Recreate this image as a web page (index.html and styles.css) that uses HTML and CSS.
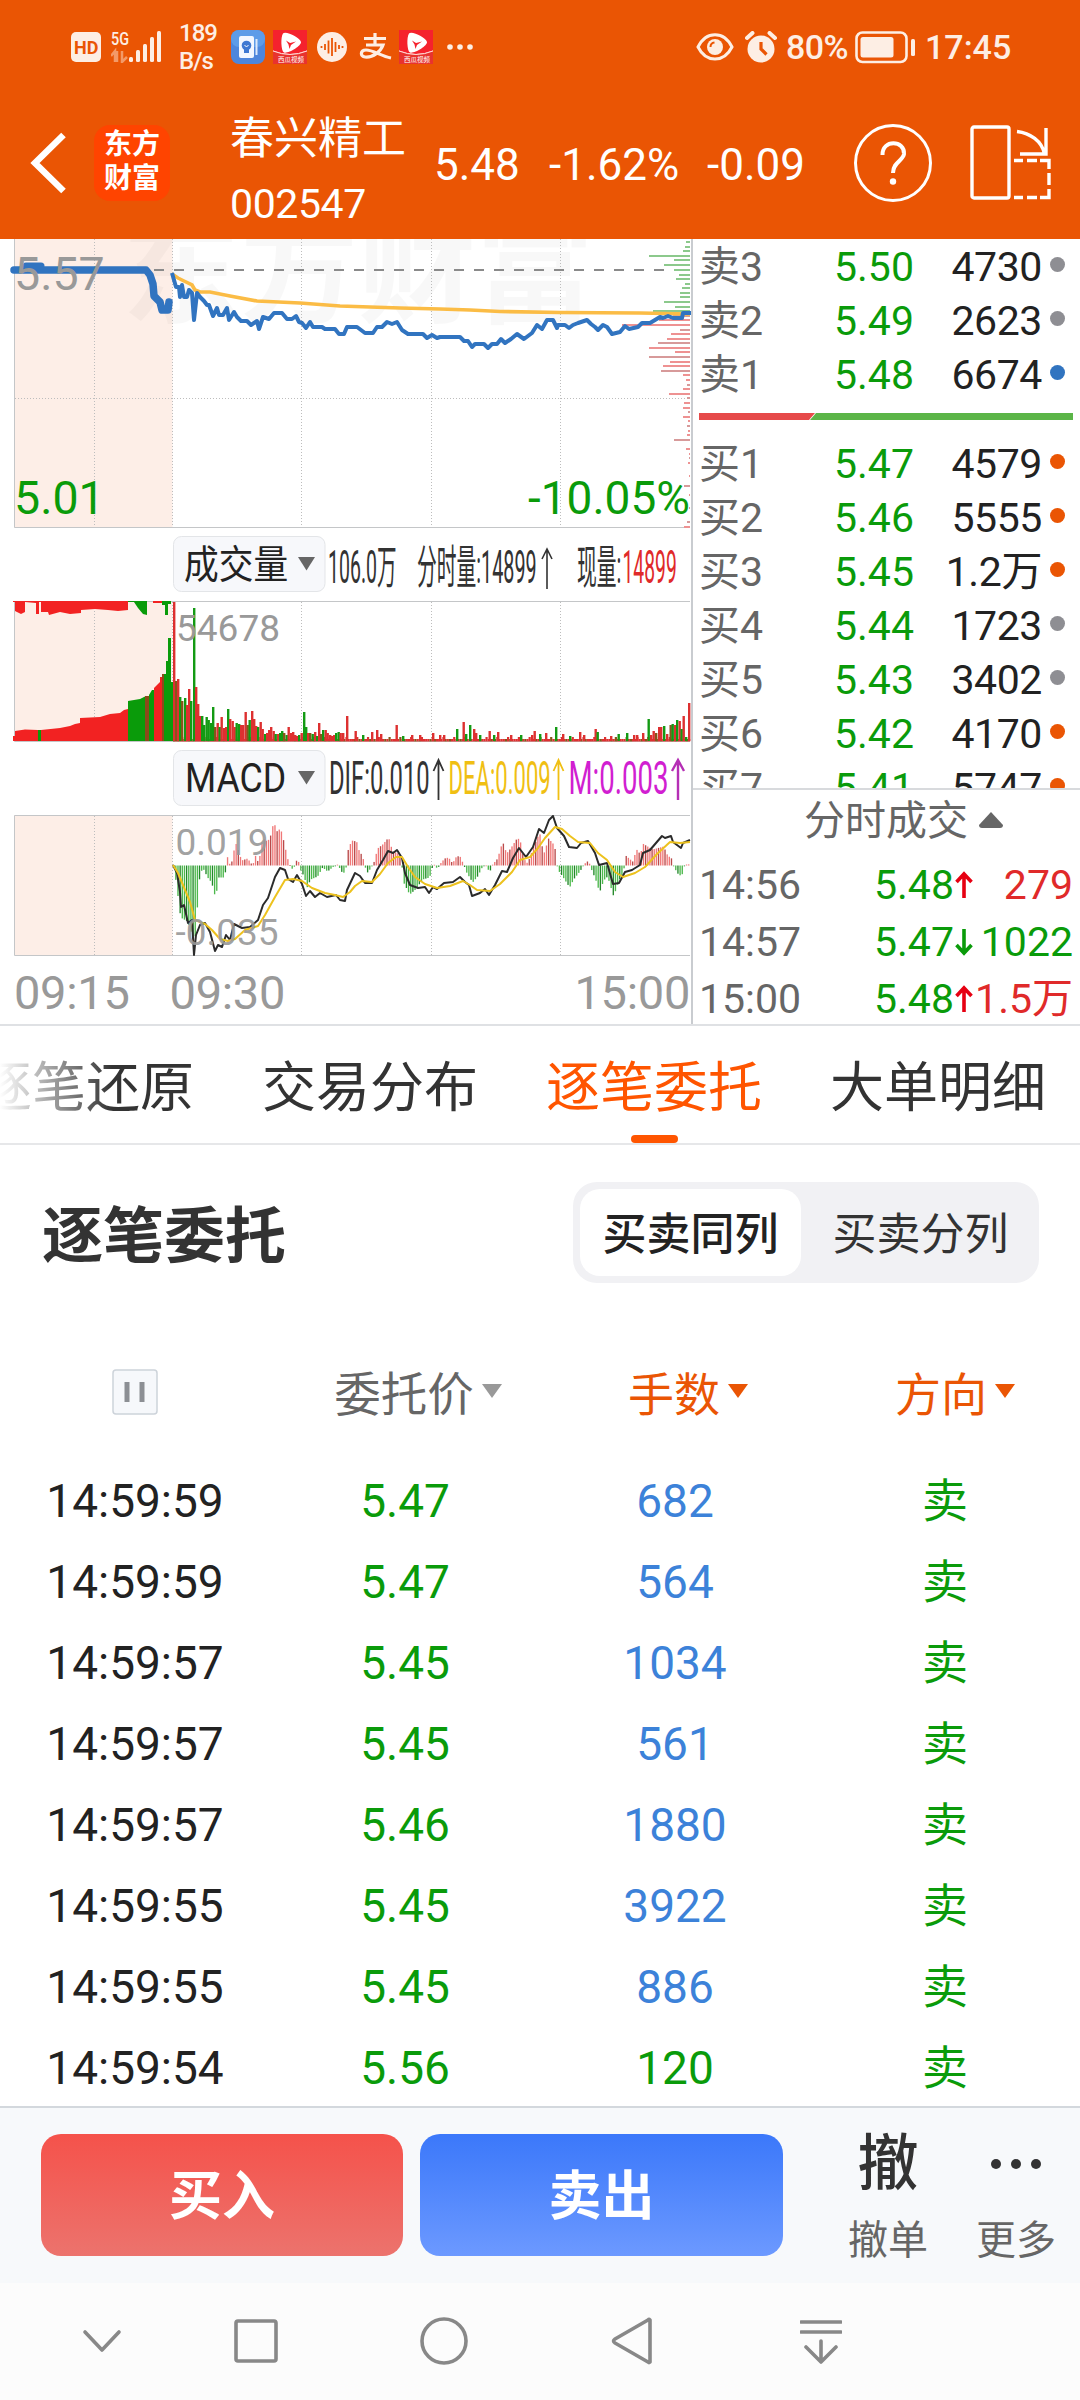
FILE: index.html
```html
<!DOCTYPE html>
<html lang="zh-CN">
<head>
<meta charset="utf-8">
<title>春兴精工 002547</title>
<link rel="stylesheet" href="styles.css">
</head>
<body>
<svg class="defs" width="0" height="0">
  <symbol id="video-app" viewBox="0 0 34 34">
    <rect width="34" height="34" fill="#f5222d"/>
    <path d="M0 21Q17 28 34 21" fill="none" stroke="#ffd9d4" stroke-width="1"/>
    <path fill-rule="evenodd" d="M10 3.500C13 .500 27 8 28 12C28.500 16 15 24 11 22.500C8 21 7.500 7 10 3.500ZM13 10.500L17 13L23 11.500L18 15L16.500 19L15.500 14.500Z" fill="#fff"/>
    <path d="M0 21Q17 28 34 21V34H0Z" fill="#e8332e"/>
    <path d="M0 21Q17 28 34 21" fill="none" stroke="#ffd9d4" stroke-width="1"/>
    <text x="5" y="31.500" font-size="6.500" fill="#fff">西瓜视频</text>
  </symbol>
  <symbol id="up" viewBox="0 0 18 28"><path d="M9 27V3M1.500 11L9 3L16.500 11" fill="none" stroke="#e60012" stroke-width="3.600"/></symbol>
  <symbol id="down" viewBox="0 0 18 28"><path d="M9 1V25M1.500 17L9 25L16.500 17" fill="none" stroke="#0a9b0a" stroke-width="3.600"/></symbol>
</svg>
<div class="screen">
  <div class="top">
    <div class="status">
      <svg class="s-hd" width="30" height="30" viewBox="0 0 30 30"><rect width="30" height="30" rx="5" fill="#fdeee4"/><text x="3" y="21.500" font-size="18" font-weight="700" fill="#ea5504">HD</text></svg>
      <svg class="s-signal" width="51" height="32" viewBox="0 0 51 32" fill="#fdeee4"><text transform="translate(0 14) scale(.8 1)" font-size="18" font-weight="500">5G</text><path d="M4 31V20L0 25M6 20V31M11 20V31L16 26" fill="none" stroke="#f39a68" stroke-width="2.500"/><rect x="18" y="26" width="4" height="5" rx="1.500"/><rect x="25" y="19" width="4" height="12" rx="1.500"/><rect x="32" y="13" width="4" height="18" rx="1.500"/><rect x="39" y="6" width="4" height="25" rx="1.500"/><rect x="46" y="0" width="4" height="31" rx="1.500"/></svg>
      <div class="s-speed"><span>189</span><span>B/s</span></div>
      <svg class="s-tips" width="34" height="34" viewBox="0 0 34 34"><rect width="34" height="34" rx="8" fill="#4d86dc"/><rect width="34" height="17" rx="8" fill="#5d9ce8"/><rect x="8" y="6" width="15" height="22" rx="2" fill="#f2f7ff"/><path d="M25.500 9V25" stroke="#dce9fb" stroke-width="2"/><circle cx="15.500" cy="15.500" r="4.800" fill="#3d78d2"/><path d="M13 19h5v4h-5z" fill="#3d78d2"/><path d="M13.500 15l2 2 2-2" fill="none" stroke="#fff"/></svg>
      <svg class="s-video" width="34" height="34"><use href="#video-app"/></svg>
      <svg class="s-wave" width="30" height="30" viewBox="0 0 30 30"><circle cx="15" cy="15" r="15" fill="#fdeee4"/><path d="M4.500 14v2M8 12v6M11.500 8.500v13M15 6v18M18.500 10v10M22 13v4M25.500 14v2" stroke="#ea5504" stroke-width="1.800"/></svg>
      <svg class="s-pay" width="34" height="28" viewBox="0 0 34 28" fill="none" stroke="#fdeee4" stroke-width="3.200"><path d="M5 5.500H27M16 0V11M7 12H24C22 18 14 25 6 24C1 23.500 1 17 7 17C14 17 22 23 32 25"/></svg>
      <svg class="s-video2" width="34" height="34"><use href="#video-app"/></svg>
      <svg class="s-more" width="26" height="6" viewBox="0 0 26 6" fill="#fdeee4"><circle cx="3" cy="3" r="2.800"/><circle cx="13" cy="3" r="2.800"/><circle cx="23" cy="3" r="2.800"/></svg>
      <span class="grow"></span>
      <svg class="s-eye" width="38" height="30" viewBox="0 0 38 30"><path d="M2 15C10 -1.500 28 -1.500 36 15C28 31 10 31 2 15Z" fill="none" stroke="#fdeee4" stroke-width="3"/><circle cx="19" cy="15" r="8" fill="#fdeee4"/><path d="M14.500 15Q14.500 11 18.500 10.500" fill="none" stroke="#ea5504" stroke-width="2"/></svg>
      <svg class="s-alarm" width="32" height="32" viewBox="0 0 32 32"><circle cx="16" cy="18" r="13.500" fill="#fdeee4"/><path d="M2 7L7.500 2M30 7L24.500 2" stroke="#fdeee4" stroke-width="4" stroke-linecap="round"/><path d="M16 11V18L21.500 23.500" fill="none" stroke="#ea5504" stroke-width="3.200"/></svg>
      <span class="s-pct">80%</span>
      <svg class="s-batt" width="61" height="33" viewBox="0 0 61 33"><rect x="1.500" y="1.500" width="50" height="29.500" rx="6" fill="none" stroke="#fdeee4" stroke-width="2.600"/><rect x="5.500" y="6" width="33" height="20.500" rx="2.500" fill="#fdeee4"/><rect x="56" y="8" width="4" height="17" rx="1.500" fill="#fdeee4"/></svg>
      <span class="s-time">17:45</span>
    </div>
    <div class="titlebar">
      <svg class="back" width="38" height="64" viewBox="0 0 38 64"><path d="M34.500 4L6 32L34.500 60" fill="none" stroke="#fff" stroke-width="6.500"/></svg>
      <div class="logo"><span>东方</span><span>财富</span></div>
      <div class="stock"><span class="stock-name">春兴精工</span><span class="stock-code">002547</span></div>
      <span class="q-price">5.48</span>
      <span class="q-pct">-1.62%</span>
      <span class="q-diff">-0.09</span>
      <svg class="help" width="80" height="80" viewBox="0 0 80 80"><circle cx="40" cy="40" r="37.500" fill="none" stroke="#fff" stroke-width="3"/><path d="M29.500 32C29 16 52 17 51 31C50 38 40 39 40 50" fill="none" stroke="#fff" stroke-width="4"/><circle cx="40" cy="58.500" r="3.200" fill="#fff"/></svg>
      <svg class="rotate" width="82" height="76" viewBox="0 0 82 76" fill="none" stroke="#fff" stroke-width="3.400"><rect x="2" y="2" width="37" height="71" rx="2"/><path d="M47 6.500C60 8 72 16 74.500 29M76 3V29H50M44 35.500H53M57 35.500H67M70 35.500H79V44M79 48V60M79 64V72.500H70M67 72.500H57M53 72.500H44"/></svg>
    </div>
  </div>

  <div class="market">
    <div class="charts">
      <svg class="price" width="691" height="290" viewBox="0 239 691 290">
        <rect x="14" y="239" width="158.500" height="289" fill="#fdeee7"/>
        <text x="122" y="314" font-size="118" font-weight="700" fill="#000" fill-opacity=".028">东方财富</text>
        <path d="M94.500 239V527M172.500 239V527M301.500 239V527M431.500 239V527M560.500 239V527M15 398.500H690" stroke="#bdbdbd" stroke-dasharray="1 2"/>
        <path d="M14.500 239V527.500H690" fill="none" stroke="#c4c6c8"/>
        <path d="M14 270H690" stroke="#8a8a8a" stroke-width="2" stroke-dasharray="10 10"/>
        <g id="ladder"></g>
        <path d="M172 274L178 278L184 281L192 285L195 290L200 292L210 292L230 296L257 301L300 303L340 306L400 308L440 309L470 310L500 311.500L560 312.500L640 313L690 314" fill="none" stroke="#fbbc45" stroke-width="3.600"/>
        <path d="M14 270H146L150 275L153 284L154 296L160 302L162 310H168L169 302" fill="none" stroke="#3174c0" stroke-width="7.500" stroke-linecap="round" stroke-linejoin="round"/>
        <path d="M26 266H41" stroke="#3174c0" stroke-width="7" stroke-linecap="round"/>
        <path d="M172 273L176 287L179 287L180 297L182 285L184 297L187 297L189 290L192 293L194 320L197 293L200 297L204 301L207 305L209 305L213 316L217 308L219 315L223 315L227 308L229 320L234 312L237 317L241 321L247 321L251 325L257 321L259 329L263 317L269 319L274 313L282 313L287 319L292 319L296 316L299 322L302 323L306 328L310 322L313 327L318 327L322 327L325 329L335 329L339 334L344 334L347 327L357 327L365 333L373 333L377 327L382 327L387 322L392 324L397 322L402 330L408 334L423 334L427 338L432 335L437 338L440 337L460 337L464 341L468 341L472 347L475 344L484 344L488 348L492 344L497 344L501 339L505 343L511 339L517 334L524 339L532 333L537 325L542 329L547 320L553 320L557 328L558 325L565 325L569 328L573 325L578 323L587 320L591 324L595 327L598 330L603 325L607 327L612 334L620 332L625 326L629 329L638 327L642 323L650 323L655 320L660 317L663 318L668 316L673 318L682 318L683 313L691 313" fill="none" stroke="#3174c0" stroke-width="4" stroke-linejoin="round"/>
        <text x="14" y="289.500" font-size="46.500" fill="#999">5.57</text>
        <text x="14" y="514" font-size="46.500" fill="#0a9b0a">5.01</text>
        <text x="690" y="514" font-size="46" fill="#0a9b0a" text-anchor="end">-10.05%</text>
      </svg>

      <svg class="legend" width="691" height="71" viewBox="0 530 691 71">
        <rect x="173.500" y="536.500" width="151.500" height="55" rx="8" fill="#f7f8fb" stroke="#e3e5e8"/>
        <text transform="translate(184 578) scale(.89 1)" font-size="39" fill="#222">成交量</text>
        <path d="M298 557H315L306.500 570.500Z" fill="#666"/>
        <g font-size="46" fill="#333">
          <text transform="translate(328 583) scale(.425 1)">106.0万</text>
          <text transform="translate(417 583) scale(.43 1)">分时量:14899</text>
          <path d="M547 589V549M542 559L547 549L552 559" fill="none" stroke="#333" stroke-width="1.600"/>
          <text transform="translate(577 583) scale(.43 1)">现量:</text>
          <text transform="translate(622.500 583) scale(.42 1)" fill="#e02a2a">14899</text>
        </g>
      </svg>

      <svg class="volume" width="691" height="142" viewBox="0 601 691 142">
        <rect x="14" y="601" width="158.500" height="140" fill="#fdeee7"/>
        <path d="M94.500 602V741M172.500 602V741M301.500 602V741M431.500 602V741M560.500 602V741" stroke="#bdbdbd" stroke-dasharray="1 2"/>
        <path d="M690 601.500H14.500V741.500H690" fill="none" stroke="#c4c6c8"/>
        <path d="M13 601H128V610L118 611L108 610L95 609L81 610V613L70 614L60 612L49 615L48 612H41V602H39V614H36V603L25 602V612L21 614L15 611V602H13Z" fill="#f22222"/>
        <path d="M128 601H147V615L143 614L138 608L134 602H128ZM162 601H171V604H168V615H165V605H162Z" fill="#0a9b0a"/>
        <path d="M153 601H162V603H153Z" fill="#f22222"/>
        <path d="M13 741V736H15V731L25 729.500L38 730H41L60 728L70 726L75 724L80 723V718L100 717L110 714L120 713L124 710L128 709V741Z" fill="#f22222"/>
        <path d="M38 741V730H41V741ZM128 741V701L140 699L146 696H149V741Z" fill="#0a9b0a"/>
        <path d="M145 741V696H149V741ZM162 741V674H165V741Z" fill="#8b4a1a"/>
        <path d="M149 741V695L152 690H154V741ZM164 741V674H166V661H168V638H171V741ZM171 741V682H173V741Z" fill="#0a9b0a"/>
        <path d="M154 741V688L158 684L160 682V677H162V741Z" fill="#f22222"/>
        <g id="volume-bars"></g>
        <text x="176" y="641" font-size="37" fill="#999">54678</text>
      </svg>

      <svg class="legend" width="691" height="72" viewBox="0 743 691 72">
        <rect x="173.500" y="750.500" width="151.500" height="55" rx="8" fill="#f7f8fb" stroke="#e3e5e8"/>
        <text transform="translate(185 792) scale(.87 1)" font-size="41" fill="#222">MACD</text>
        <path d="M298 771H315L306.500 784.500Z" fill="#666"/>
        <g font-size="46">
          <text transform="translate(329 794) scale(.517 1)" fill="#333">DIF:0.010</text>
          <text transform="translate(448.500 794) scale(.48 1)" fill="#f0bf13">DEA:0.009</text>
          <text transform="translate(568.500 794) scale(.6 1)" fill="#d11fd1">M:0.003</text>
        </g>
        <g fill="none" stroke-width="1.800">
          <path d="M438.500 800V760M433.500 771L438.500 760L443.500 771" stroke="#333"/>
          <path d="M558.500 800V760M553.500 771L558.500 760L563.500 771" stroke="#f0bf13"/>
          <path d="M678 800V760M672 771L678 760L684 771" stroke="#b52fb5" stroke-width="2.400"/>
        </g>
      </svg>

      <svg class="macd" width="691" height="142" viewBox="0 815 691 142">
        <rect x="14" y="815" width="158.500" height="140" fill="#fdeee7"/>
        <path d="M94.500 816V955M172.500 816V955M301.500 816V955M431.500 816V955M560.500 816V955" stroke="#bdbdbd" stroke-dasharray="1 2"/>
        <path d="M690 815.500H14.500V955.500H690" fill="none" stroke="#c4c6c8"/>
        <g id="macd-bars"></g>
        <path d="M173 865L177 873L180 892L181 907L184 905L188 923L192 920L194 955L196 935L200 925L205 923L210 932L215 951L218 945L222 947L226 935L230 940L234 924L242 928L250 927L258 920L263 905L268 898L275 877L280 868L285 870L288 879L293 882L297 875L302 884L306 896L310 891L315 897L320 893L327 897L336 895L340 900L345 901L347 890L355 873L360 876L365 883L372 883L377 870L383 860L388 851L393 853L397 850L402 858L405 873L410 885L418 888L425 887L429 893L433 887L437 889L444 883L453 882L460 877L465 882L469 885L472 896L480 893L485 889L489 895L495 885L502 871L507 872L513 858L519 848L526 857L533 847L539 829L544 833L549 820L553 816L557 828L564 836L569 847L577 848L581 843L588 841L595 853L599 865L607 863L613 884L619 883L625 872L632 870L640 865L643 853L650 850L662 836L665 838L671 836L673 842L681 848L683 843L690 840" fill="none" stroke="#2b2b2b" stroke-width="2" stroke-linejoin="round"/>
        <path d="M173 865L178 873L183 885L190 902L195 920L205 924L212 930L220 939L228 941L235 939L245 930L258 926L265 915L275 897L285 880L293 879L302 881L312 888L325 893L335 895L343 897L350 892L355 886L362 881L372 882L380 874L388 863L396 857L402 857L408 867L415 877L425 884L437 888L450 886L463 881L470 885L477 890L490 891L500 884L512 872L520 860L530 857L538 848L545 838L555 827L562 829L570 836L578 842L590 843L598 853L607 860L615 872L623 877L635 873L645 867L657 854L670 842L680 843L690 842" fill="none" stroke="#edc21e" stroke-width="2" stroke-linejoin="round"/>
        <g font-size="37" fill="#999" fill-opacity=".92">
          <text x="175.500" y="855">0.019</text>
          <text x="175.500" y="945">-0.035</text>
        </g>
      </svg>
      <div class="times"><span>09:15</span><span class="t-open">09:30</span><span class="t-close">15:00</span></div>
    </div>

    <div class="book">
      <div class="levels">
        <div class="level"><span>卖3</span><b>5.50</b><em>4730</em><i class="grey"></i></div>
        <div class="level"><span>卖2</span><b>5.49</b><em>2623</em><i class="grey"></i></div>
        <div class="level"><span>卖1</span><b>5.48</b><em>6674</em><i class="blue"></i></div>
        <svg class="ratio" width="374" height="7" viewBox="0 0 374 7"><path d="M0 0H116L110 7H0Z" fill="#e64a4a"/><path d="M117 0H374V7H111Z" fill="#5bb548"/></svg>
        <div class="level"><span>买1</span><b>5.47</b><em>4579</em><i></i></div>
        <div class="level"><span>买2</span><b>5.46</b><em>5555</em><i></i></div>
        <div class="level"><span>买3</span><b>5.45</b><em>1.2万</em><i></i></div>
        <div class="level"><span>买4</span><b>5.44</b><em>1723</em><i class="grey"></i></div>
        <div class="level"><span>买5</span><b>5.43</b><em>3402</em><i class="grey"></i></div>
        <div class="level"><span>买6</span><b>5.42</b><em>4170</em><i></i></div>
        <div class="level"><span>买7</span><b>5.41</b><em>5747</em><i></i></div>
      </div>
      <div class="ticks-head">分时成交<svg width="24" height="16" viewBox="0 0 24 16"><path d="M12 0L24 13Q24 16 21 16H3Q0 16 0 13Z" fill="#666"/></svg></div>
      <div class="tick"><span>14:56</span><b>5.48</b><svg width="18" height="28"><use href="#up"/></svg><em class="red">279</em></div>
      <div class="tick"><span>14:57</span><b>5.47</b><svg width="18" height="28"><use href="#down"/></svg><em class="green">1022</em></div>
      <div class="tick"><span>15:00</span><b>5.48</b><svg width="18" height="28"><use href="#up"/></svg><em class="red">1.5万</em></div>
    </div>
  </div>

  <div class="tabs">
    <span class="tab faded">逐笔还原</span><span class="tab">交易分布</span><span class="tab active">逐笔委托</span><span class="tab">大单明细</span>
  </div>

  <div class="section-head">
    <h2>逐笔委托</h2>
    <div class="segment"><span class="on">买卖同列</span><span>买卖分列</span></div>
  </div>

  <div class="orders">
    <div class="row head">
      <span><svg width="46" height="46" viewBox="0 0 46 46"><rect x="1" y="1" width="44" height="44" rx="3" fill="#f6f8fb" stroke="#cdd3da" stroke-width="1.500"/><path d="M15 13V33M30 13V33" stroke="#8c8f94" stroke-width="5"/></svg></span>
      <span class="sort">委托价<svg width="20" height="14"><path d="M0 0H20L10 14Z" fill="#999"/></svg></span>
      <span class="sort hot">手数<svg width="20" height="14"><path d="M0 0H20L10 14Z" fill="#ea5504"/></svg></span>
      <span class="sort hot">方向<svg width="20" height="14"><path d="M0 0H20L10 14Z" fill="#ea5504"/></svg></span>
    </div>
    <div class="row"><span>14:59:59</span><span class="green">5.47</span><span class="lots">682</span><span class="green">卖</span></div>
    <div class="row"><span>14:59:59</span><span class="green">5.47</span><span class="lots">564</span><span class="green">卖</span></div>
    <div class="row"><span>14:59:57</span><span class="green">5.45</span><span class="lots">1034</span><span class="green">卖</span></div>
    <div class="row"><span>14:59:57</span><span class="green">5.45</span><span class="lots">561</span><span class="green">卖</span></div>
    <div class="row"><span>14:59:57</span><span class="green">5.46</span><span class="lots">1880</span><span class="green">卖</span></div>
    <div class="row"><span>14:59:55</span><span class="green">5.45</span><span class="lots">3922</span><span class="green">卖</span></div>
    <div class="row"><span>14:59:55</span><span class="green">5.45</span><span class="lots">886</span><span class="green">卖</span></div>
    <div class="row"><span>14:59:54</span><span class="green">5.56</span><span class="green">120</span><span class="green">卖</span></div>
  </div>

  <div class="actions">
    <div class="btn buy">买入</div>
    <div class="btn sell">卖出</div>
    <div class="act cancel"><span class="act-icon">撤</span><span class="act-label">撤单</span></div>
    <div class="act more"><span class="act-icon"><svg width="50" height="10" viewBox="0 0 50 10" fill="#333"><circle cx="5" cy="5" r="5"/><circle cx="25" cy="5" r="5"/><circle cx="45" cy="5" r="5"/></svg></span><span class="act-label">更多</span></div>
  </div>

  <div class="nav">
    <svg class="n1" width="40" height="48" viewBox="0 0 40 48"><path d="M3 15L20 33L37 15"/></svg>
    <svg class="n2" width="44" height="48" viewBox="0 0 44 48"><rect x="2" y="4" width="40" height="40" rx="2"/></svg>
    <svg class="n3" width="50" height="48" viewBox="0 0 50 48"><circle cx="25" cy="24" r="22"/></svg>
    <svg class="n4" width="42" height="48" viewBox="0 0 42 48"><path d="M39 3V45Q38 46 37 45L4 26Q1 24 4 22L37 3Q38 2 39 3Z"/></svg>
    <svg class="n5" width="42" height="48" viewBox="0 0 42 48"><path d="M1 5H41M1 15H41M21 24V45M6 30L21 45L36 30"/></svg>
  </div>
</div>
<script src="charts.js"></script>
</body>
</html>
```

FILE: styles.css
```css
* { box-sizing: border-box; }
body { margin: 0; background: #fff; font-family: Roboto, "Noto Sans CJK SC", sans-serif; color: #222; }
svg { display: block; flex: none; }
svg text { font-family: Roboto, "Noto Sans CJK SC", sans-serif; }
b, em, i { font-weight: 400; font-style: normal; }
.defs { display: none; }
.screen { width: 1080px; height: 2400px; display: flex; flex-direction: column; overflow: hidden; }
.green { color: #0a9b0a; }
.red { color: #e02a2a; }
.grow { flex: 1; }

.top { height: 239px; flex: none; background: #ea5504; color: #fff; }
.status { height: 94px; padding: 0 72px 0 71px; display: flex; align-items: center; color: #fdeee4; }
.s-signal { margin-left: 10px; }
.s-speed { margin-left: 17px; width: 40px; flex: none; font-size: 24px; line-height: 28px; font-weight: 500; display: flex; flex-direction: column; letter-spacing: -1px; }
.s-tips { margin-left: 12px; }
.s-video { margin-left: 8px; }
.s-wave { margin-left: 10px; }
.s-pay { margin-left: 12px; }
.s-video2 { margin-left: 6px; }
.s-more { margin-left: 14px; }
.s-alarm { margin-left: 11px; }
.s-pct { margin-left: 9px; width: 69px; font-size: 34px; font-weight: 500; letter-spacing: -.6px; }
.s-time { width: 83px; margin-left: 9px; font-size: 34px; font-weight: 500; }

.titlebar { height: 145px; display: flex; align-items: center; padding-bottom: 7px; }
.back { margin-left: 29px; }
.logo { margin-left: 27px; width: 76px; height: 76px; border-radius: 16px; background: #ff4400; display: flex; flex-direction: column; align-items: center; padding-top: 3px; font-size: 28px; line-height: 34px; font-weight: 700; }
.stock { margin-left: 60px; width: 203px; display: flex; flex-direction: column; font-size: 44px; line-height: 65px; padding-top: 16px; }
.stock-code { font-size: 41px; line-height: 64px; letter-spacing: -.4px; }
.q-price, .q-pct, .q-diff { font-size: 44px; white-space: nowrap; padding-top: 3px; }
.q-price { margin-left: 1px; width: 115px; }
.q-pct { width: 158px; }
.q-diff { width: 145px; }
.help { margin-left: 1px; }
.rotate { margin-left: 37px; }

.market { height: 787px; flex: none; display: flex; border-bottom: 2px solid #dfe1e4; }
.charts { width: 691px; display: flex; flex-direction: column; }
.legend:nth-of-type(2) { margin-top: 1px; }
.times { height: 67px; display: flex; font-size: 47px; line-height: 72px; color: #999; padding-left: 14px; letter-spacing: -.3px; }
.t-open { margin-left: 40px; }
.t-close { margin-left: auto; margin-right: 1px; }
.book { width: 389px; border-left: 2px solid #c9ccd0; font-size: 41px; color: #666; }
.levels { height: 551px; overflow: hidden; border-bottom: 2px solid #d8dadd; }
.level { height: 54px; display: grid; grid-template-columns: 135px 90px 118px 1fr; align-items: center; padding-left: 6px; line-height: 56px; }
.level b, .tick b { color: #0a9b0a; }
.level em { color: #222; text-align: right; letter-spacing: -.4px; }
.level i { width: 15px; height: 15px; border-radius: 50%; background: #ea5504; margin: -5px 0 0 8px; }
.level i.grey { background: #8e8e93; }
.level i.blue { background: #3174c0; }
.ratio { margin: 12px 0 16px 6px; }
.ticks-head { height: 66px; display: flex; align-items: center; justify-content: center; gap: 11px; font-size: 41px; line-height: 62px; padding: 0 0 4px 34px; }
.ticks-head svg { margin-top: -2px; }
.tick { height: 57px; display: grid; grid-template-columns: 175px 81px 18px 1fr; align-items: center; padding: 0 7px 0 6px; line-height: 58px; }
.tick em { text-align: right; white-space: nowrap; margin-left: -12px; }

.tabs { height: 119px; flex: none; border-bottom: 2px solid #e6e7e9; display: flex; gap: 68px; margin-left: -22px; font-size: 54px; line-height: 125px; color: #333; white-space: nowrap; }
.tab { position: relative; width: 216px; flex: none; height: 117px; }
.tab.faded { background: linear-gradient(90deg, #fff 10%, #333 62%); -webkit-background-clip: text; background-clip: text; color: transparent; }
.tab.active { color: #ff5500; }
.tab.active::after { content: ""; position: absolute; left: 85px; bottom: 0; width: 47px; height: 8px; border-radius: 4px; background: #ff5500; }

.section-head { height: 175px; flex: none; display: flex; align-items: center; justify-content: space-between; padding: 0 41px 0 42px; }
h2 { margin: 9px 0 0; font-size: 61px; font-weight: 700; line-height: 90px; color: #333; }
.segment { width: 466px; height: 101px; border-radius: 24px; background: #f1f1f4; padding: 7px; display: flex; margin-bottom: 1px; color: #333; }
.segment span { flex: 1; text-align: center; font-size: 44px; line-height: 92px; padding-left: 8px; }
.segment .on { flex: 0 0 221px; height: 87px; padding: 0; border-radius: 20px; background: #fff; font-weight: 500; color: #222; }

.orders { height: 786px; flex: none; padding-top: 31px; display: flex; flex-direction: column; }
.row { height: 81px; flex: none; display: grid; grid-template-columns: repeat(4, 270px); justify-items: center; align-items: center; font-size: 46px; line-height: 83px; white-space: nowrap; }
.row.head { height: 109px; align-items: start; line-height: 88px; color: #666; }
.head > span:first-child { padding-top: 18px; }
.sort { display: flex; align-items: center; gap: 8px; padding-left: 26px; }
.sort:nth-child(2) { font-size: 46.500px; }
.sort:nth-child(4) { padding-left: 20px; }
.sort svg { margin-top: -8px; }
.hot { color: #ea5504; }
.lots { color: #3c82d9; }

.actions { height: 177px; flex: none; background: #f7f9fb; border-top: 2px solid #d3d8dd; display: flex; padding: 26px 0 0 41px; }
.btn { width: 362px; height: 122px; border-radius: 20px; color: #fff; font-size: 53px; line-height: 127px; font-weight: 700; text-align: center; }
.buy { background: linear-gradient(#f5524b, #ec736d); }
.sell { margin-left: 17px; width: 363px; background: linear-gradient(#3b78fa, #6c99ff); }
.act { display: flex; flex-direction: column; align-items: center; width: 128px; }
.cancel { margin-left: 41px; }
.act-icon { height: 60px; display: flex; align-items: center; font-size: 61px; line-height: 60px; font-weight: 500; color: #333; }
.act-label { margin-top: 20px; font-size: 40px; line-height: 54px; color: #666; }

.nav { flex: 1; background: #fcfcfc; display: flex; padding-top: 34px; }
.nav svg { fill: none; stroke: #888; stroke-width: 3.6; stroke-linecap: round; stroke-linejoin: round; }
.n1 { margin-left: 82px; }
.n2 { margin-left: 112px; }
.n3 { margin-left: 141px; }
.n4 { margin-left: 142px; }
.n5 { margin-left: 147px; }
```

FILE: charts.js
```js
const NS = "http://www.w3.org/2000/svg";
const RED = "#dd3030", GREEN = "#139a13", MIXED = "#86561a";

function bar(group, x, y, w, h, fill) {
  const r = document.createElementNS(NS, "rect");
  r.setAttribute("x", x.toFixed(2));
  r.setAttribute("y", y.toFixed(2));
  r.setAttribute("width", w.toFixed(2));
  r.setAttribute("height", h.toFixed(2));
  r.setAttribute("fill", fill);
  group.appendChild(r);
}

// Volume traded at each price: [y, length], growing leftwards from the right edge.
const sells = [[242,4],[247,5],[251,7],[256,41],[260,16],[265,26],[270,16],[275,11],[279,14],[284,5],[288,8],[293,10],[297,10],[302,26],[307,15],[311,37]];
const buys = [[316,17],[320,31],[325,68],[330,10],[334,19],[339,23],[343,32],[348,41],[352,15],[357,41],[362,20],[366,27],[371,29],[375,7],[380,4],[385,3],[389,7],[394,21],[398,3],[403,6],[408,7],[412,2],[417,7],[421,2],[426,3],[431,2],[435,3],[440,16],[449,4],[454,1],[458,1],[463,2],[476,1],[486,6],[495,1],[508,1],[522,3],[527,6]];
const ladder = document.getElementById("ladder");
sells.forEach(([y, l]) => bar(ladder, 690 - l, y - 1, l, 2, "#8cc98c"));
buys.forEach(([y, l], i) => bar(ladder, 690 - l, y - 1, l, 2, i % 3 ? "#ee9292" : "#d79a9a"));

// One-minute volume: [x, height, colour].
const R = RED, G = GREEN, M = MIXED;
const vol = [[174,139,R],[176,60,M],[178,62,R],[180,44,G],[182,40,M],[185,43,G],[187,36,R],[189,52,R],[191,40,G],[194,133,G],[196,54,R],[198,37,R],[200,25,R],[202,25,G],[204,16,G],[206.500,24,G],[208.500,21,G],[211,18,G],[213,34,G],[215,14,M],[217.500,18,R],[219.500,14,G],[221.500,24,R],[224,13,R],[226,14,R],[228,32,G],[230,22,R],[232.500,20,R],[234.500,14,R],[236.500,18,G],[239,17,G],[241,16,R],[243,16,R],[245.500,29,R],[247.500,16,M],[249.500,21,G],[252,30,R],[254,22,R],[256,15,R],[258,14,G],[260.500,19,R],[262.500,12,R],[265,7,G],[267,8,R],[269,11,R],[271,14,R],[273.500,10,R],[275.500,7,G],[278,7,R],[280,8,G],[282,10,G],[284,8,M],[286.500,6,G],[288.500,14,R],[291,8,R],[293,9,R],[295,6,R],[297,5,R],[299,6,G],[301.500,8,R],[304,29,G],[306,14,G],[308,8,R],[310,8,M],[312.500,7,G],[315,9,R],[317,5,G],[319,18,R],[321,7,M],[323,11,G],[325.500,11,R],[327.500,8,R],[330,6,R],[332,5,R],[334,6,R],[336,8,G],[338.500,9,G],[340.500,8,R],[343,8,R],[347,25,R],[355.500,10,R],[363,6,G],[372,9,R],[377,11,R],[381,7,R],[396.500,16,R],[403,5,G],[412,6,R],[420,6,R],[433,8,R],[440,6,R],[444,6,R],[457,12,G],[463.500,19,R],[466,7,G],[470,16,G],[474,12,R],[476,8,R],[480,6,G],[489.500,10,R],[494,6,G],[498,9,R],[511,6,R],[521,6,G],[532,6,R],[534.500,10,R],[540,7,G],[546,8,R],[556,14,G],[563,7,R],[570,5,G],[580,9,R],[584,6,R],[595.500,12,R],[597.500,9,G],[611,5,R],[618.500,7,G],[627,8,G],[634,6,R],[637,6,R],[643,8,R],[648.500,22,G],[651,6,R],[653.500,10,R],[656,8,M],[659,14,R],[661,14,R],[664,15,G],[667,7,R],[670.500,16,M],[672.500,17,G],[675,16,R],[677,21,G],[679.500,20,R],[681.500,12,G],[683.500,25,R],[686,4,G],[689,38,R]];
const vb = document.getElementById("volume-bars");
for (let i = 0, x = 173; x < 689; i++, x += 2.155) {
  const h = 2.500 + (i * 7 % 5 === 0 ? 2 : 0);
  bar(vb, x, 741.500 - h, 2.200, h, i * 11 % 7 < 2 ? MIXED : RED);
}
vol.forEach(([x, h, c]) => bar(vb, x - 1, 741 - h, 2.400, h, c));

// MACD histogram: [x, value in px] turning points, sampled once a minute.
const macd = [[173,0],[176,-20],[180,-52],[187,-56],[194,-78],[197,-38],[199,-12],[202,-2],[207,-12],[211,-17],[215,-33],[218,-12],[223,-12],[225,-6],[226,14],[228,1],[231,3],[233,14],[236,23],[238,14],[241,5],[247,7],[252,0],[255,10],[258,2],[262,27],[267,24],[271,32],[273,45],[276,34],[280,37],[283,25],[287,7],[289,1],[292,-4],[295,1],[297,10],[299,-3],[304,-12],[306,-23],[310,-14],[317,-11],[322,-2],[327,-6],[333,-1],[337,1],[342,-8],[345,-6],[347,14],[351,25],[356,24],[358,16],[362,9],[365,-3],[367,-7],[370,-3],[373,2],[377,17],[382,21],[388,28],[392,14],[398,12],[401,2],[403,-17],[409,-29],[415,-24],[422,-14],[429,-12],[432,-1],[434,1],[437,-4],[439,1],[444,7],[448,8],[452,2],[455,8],[459,10],[463,1],[466,-7],[472,-17],[477,-11],[482,-1],[485,1],[489,-7],[492,1],[497,7],[502,24],[506,12],[510,17],[517,28],[520,23],[523,7],[527,2],[533,19],[539,33],[543,11],[548,27],[554,20],[557,-4],[562,-11],[569,-22],[573,-14],[580,-5],[583,1],[588,5],[590,-2],[595,-14],[599,-27],[603,-15],[607,-11],[613,-31],[618,-16],[623,-6],[625,10],[632,4],[636,16],[640,11],[642,22],[652,16],[663,19],[667,10],[671,7],[673,-1],[677,-8],[681,-11],[684,1],[688,1],[690,6]];
const mb = document.getElementById("macd-bars");
for (let i = 0, k = 0, x = 173; x < 690; i++, x += 2.155) {
  while (k < macd.length - 2 && macd[k + 1][0] < x) k++;
  const [x0, v0] = macd[k], [x1, v1] = macd[k + 1];
  const v = v0 + (v1 - v0) * (x - x0) / (x1 - x0);
  const dark = i % 3 === 0;
  const fill = v > 0 ? (dark ? "#b94a4a" : "#f07878") : (dark ? "#23882a" : "#4cb84c");
  bar(mb, x, v > 0 ? 865.500 - v : 865.500, 1.350, Math.max(Math.abs(v), .8), fill);
}
```
